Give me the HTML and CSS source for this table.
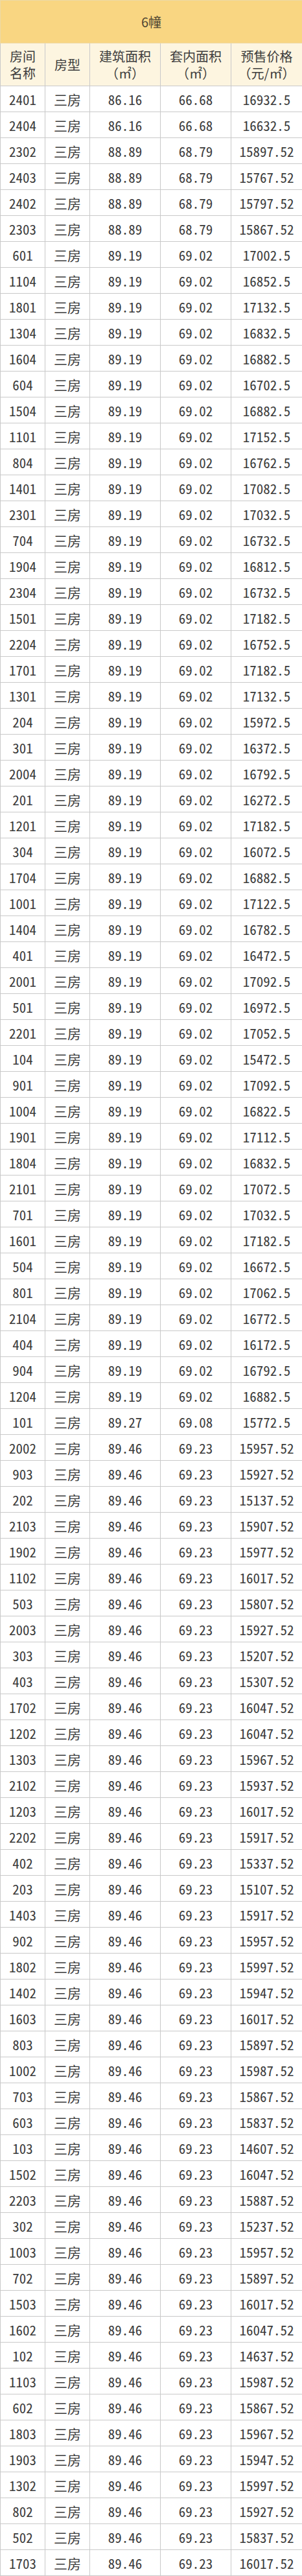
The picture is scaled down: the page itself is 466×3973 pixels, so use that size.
FILE: index.html
```html
<!DOCTYPE html>
<html lang="zh-CN">
<head>
<meta charset="utf-8">
<title>6幢</title>
<link rel="stylesheet" href="styles.css">
</head>
<body>
<table class="sheet">
<colgroup>
<col class="c-room"><col class="c-type"><col class="c-area"><col class="c-area"><col class="c-price">
</colgroup>
<thead>
<tr class="title"><th colspan="5">6幢</th></tr>
<tr class="head">
<th>房间<br>名称</th>
<th>房型</th>
<th>建筑面积<br>（㎡）</th>
<th>套内面积<br>（㎡）</th>
<th>预售价格<br>（元/㎡）</th>
</tr>
</thead>
<tbody>
<tr><td>2401</td><td>三房</td><td>86.16</td><td>66.68</td><td>16932.5</td></tr>
<tr><td>2404</td><td>三房</td><td>86.16</td><td>66.68</td><td>16632.5</td></tr>
<tr><td>2302</td><td>三房</td><td>88.89</td><td>68.79</td><td>15897.52</td></tr>
<tr><td>2403</td><td>三房</td><td>88.89</td><td>68.79</td><td>15767.52</td></tr>
<tr><td>2402</td><td>三房</td><td>88.89</td><td>68.79</td><td>15797.52</td></tr>
<tr><td>2303</td><td>三房</td><td>88.89</td><td>68.79</td><td>15867.52</td></tr>
<tr><td>601</td><td>三房</td><td>89.19</td><td>69.02</td><td>17002.5</td></tr>
<tr><td>1104</td><td>三房</td><td>89.19</td><td>69.02</td><td>16852.5</td></tr>
<tr><td>1801</td><td>三房</td><td>89.19</td><td>69.02</td><td>17132.5</td></tr>
<tr><td>1304</td><td>三房</td><td>89.19</td><td>69.02</td><td>16832.5</td></tr>
<tr><td>1604</td><td>三房</td><td>89.19</td><td>69.02</td><td>16882.5</td></tr>
<tr><td>604</td><td>三房</td><td>89.19</td><td>69.02</td><td>16702.5</td></tr>
<tr><td>1504</td><td>三房</td><td>89.19</td><td>69.02</td><td>16882.5</td></tr>
<tr><td>1101</td><td>三房</td><td>89.19</td><td>69.02</td><td>17152.5</td></tr>
<tr><td>804</td><td>三房</td><td>89.19</td><td>69.02</td><td>16762.5</td></tr>
<tr><td>1401</td><td>三房</td><td>89.19</td><td>69.02</td><td>17082.5</td></tr>
<tr><td>2301</td><td>三房</td><td>89.19</td><td>69.02</td><td>17032.5</td></tr>
<tr><td>704</td><td>三房</td><td>89.19</td><td>69.02</td><td>16732.5</td></tr>
<tr><td>1904</td><td>三房</td><td>89.19</td><td>69.02</td><td>16812.5</td></tr>
<tr><td>2304</td><td>三房</td><td>89.19</td><td>69.02</td><td>16732.5</td></tr>
<tr><td>1501</td><td>三房</td><td>89.19</td><td>69.02</td><td>17182.5</td></tr>
<tr><td>2204</td><td>三房</td><td>89.19</td><td>69.02</td><td>16752.5</td></tr>
<tr><td>1701</td><td>三房</td><td>89.19</td><td>69.02</td><td>17182.5</td></tr>
<tr><td>1301</td><td>三房</td><td>89.19</td><td>69.02</td><td>17132.5</td></tr>
<tr><td>204</td><td>三房</td><td>89.19</td><td>69.02</td><td>15972.5</td></tr>
<tr><td>301</td><td>三房</td><td>89.19</td><td>69.02</td><td>16372.5</td></tr>
<tr><td>2004</td><td>三房</td><td>89.19</td><td>69.02</td><td>16792.5</td></tr>
<tr><td>201</td><td>三房</td><td>89.19</td><td>69.02</td><td>16272.5</td></tr>
<tr><td>1201</td><td>三房</td><td>89.19</td><td>69.02</td><td>17182.5</td></tr>
<tr><td>304</td><td>三房</td><td>89.19</td><td>69.02</td><td>16072.5</td></tr>
<tr><td>1704</td><td>三房</td><td>89.19</td><td>69.02</td><td>16882.5</td></tr>
<tr><td>1001</td><td>三房</td><td>89.19</td><td>69.02</td><td>17122.5</td></tr>
<tr><td>1404</td><td>三房</td><td>89.19</td><td>69.02</td><td>16782.5</td></tr>
<tr><td>401</td><td>三房</td><td>89.19</td><td>69.02</td><td>16472.5</td></tr>
<tr><td>2001</td><td>三房</td><td>89.19</td><td>69.02</td><td>17092.5</td></tr>
<tr><td>501</td><td>三房</td><td>89.19</td><td>69.02</td><td>16972.5</td></tr>
<tr><td>2201</td><td>三房</td><td>89.19</td><td>69.02</td><td>17052.5</td></tr>
<tr><td>104</td><td>三房</td><td>89.19</td><td>69.02</td><td>15472.5</td></tr>
<tr><td>901</td><td>三房</td><td>89.19</td><td>69.02</td><td>17092.5</td></tr>
<tr><td>1004</td><td>三房</td><td>89.19</td><td>69.02</td><td>16822.5</td></tr>
<tr><td>1901</td><td>三房</td><td>89.19</td><td>69.02</td><td>17112.5</td></tr>
<tr><td>1804</td><td>三房</td><td>89.19</td><td>69.02</td><td>16832.5</td></tr>
<tr><td>2101</td><td>三房</td><td>89.19</td><td>69.02</td><td>17072.5</td></tr>
<tr><td>701</td><td>三房</td><td>89.19</td><td>69.02</td><td>17032.5</td></tr>
<tr><td>1601</td><td>三房</td><td>89.19</td><td>69.02</td><td>17182.5</td></tr>
<tr><td>504</td><td>三房</td><td>89.19</td><td>69.02</td><td>16672.5</td></tr>
<tr><td>801</td><td>三房</td><td>89.19</td><td>69.02</td><td>17062.5</td></tr>
<tr><td>2104</td><td>三房</td><td>89.19</td><td>69.02</td><td>16772.5</td></tr>
<tr><td>404</td><td>三房</td><td>89.19</td><td>69.02</td><td>16172.5</td></tr>
<tr><td>904</td><td>三房</td><td>89.19</td><td>69.02</td><td>16792.5</td></tr>
<tr><td>1204</td><td>三房</td><td>89.19</td><td>69.02</td><td>16882.5</td></tr>
<tr><td>101</td><td>三房</td><td>89.27</td><td>69.08</td><td>15772.5</td></tr>
<tr><td>2002</td><td>三房</td><td>89.46</td><td>69.23</td><td>15957.52</td></tr>
<tr><td>903</td><td>三房</td><td>89.46</td><td>69.23</td><td>15927.52</td></tr>
<tr><td>202</td><td>三房</td><td>89.46</td><td>69.23</td><td>15137.52</td></tr>
<tr><td>2103</td><td>三房</td><td>89.46</td><td>69.23</td><td>15907.52</td></tr>
<tr><td>1902</td><td>三房</td><td>89.46</td><td>69.23</td><td>15977.52</td></tr>
<tr><td>1102</td><td>三房</td><td>89.46</td><td>69.23</td><td>16017.52</td></tr>
<tr><td>503</td><td>三房</td><td>89.46</td><td>69.23</td><td>15807.52</td></tr>
<tr><td>2003</td><td>三房</td><td>89.46</td><td>69.23</td><td>15927.52</td></tr>
<tr><td>303</td><td>三房</td><td>89.46</td><td>69.23</td><td>15207.52</td></tr>
<tr><td>403</td><td>三房</td><td>89.46</td><td>69.23</td><td>15307.52</td></tr>
<tr><td>1702</td><td>三房</td><td>89.46</td><td>69.23</td><td>16047.52</td></tr>
<tr><td>1202</td><td>三房</td><td>89.46</td><td>69.23</td><td>16047.52</td></tr>
<tr><td>1303</td><td>三房</td><td>89.46</td><td>69.23</td><td>15967.52</td></tr>
<tr><td>2102</td><td>三房</td><td>89.46</td><td>69.23</td><td>15937.52</td></tr>
<tr><td>1203</td><td>三房</td><td>89.46</td><td>69.23</td><td>16017.52</td></tr>
<tr><td>2202</td><td>三房</td><td>89.46</td><td>69.23</td><td>15917.52</td></tr>
<tr><td>402</td><td>三房</td><td>89.46</td><td>69.23</td><td>15337.52</td></tr>
<tr><td>203</td><td>三房</td><td>89.46</td><td>69.23</td><td>15107.52</td></tr>
<tr><td>1403</td><td>三房</td><td>89.46</td><td>69.23</td><td>15917.52</td></tr>
<tr><td>902</td><td>三房</td><td>89.46</td><td>69.23</td><td>15957.52</td></tr>
<tr><td>1802</td><td>三房</td><td>89.46</td><td>69.23</td><td>15997.52</td></tr>
<tr><td>1402</td><td>三房</td><td>89.46</td><td>69.23</td><td>15947.52</td></tr>
<tr><td>1603</td><td>三房</td><td>89.46</td><td>69.23</td><td>16017.52</td></tr>
<tr><td>803</td><td>三房</td><td>89.46</td><td>69.23</td><td>15897.52</td></tr>
<tr><td>1002</td><td>三房</td><td>89.46</td><td>69.23</td><td>15987.52</td></tr>
<tr><td>703</td><td>三房</td><td>89.46</td><td>69.23</td><td>15867.52</td></tr>
<tr><td>603</td><td>三房</td><td>89.46</td><td>69.23</td><td>15837.52</td></tr>
<tr><td>103</td><td>三房</td><td>89.46</td><td>69.23</td><td>14607.52</td></tr>
<tr><td>1502</td><td>三房</td><td>89.46</td><td>69.23</td><td>16047.52</td></tr>
<tr><td>2203</td><td>三房</td><td>89.46</td><td>69.23</td><td>15887.52</td></tr>
<tr><td>302</td><td>三房</td><td>89.46</td><td>69.23</td><td>15237.52</td></tr>
<tr><td>1003</td><td>三房</td><td>89.46</td><td>69.23</td><td>15957.52</td></tr>
<tr><td>702</td><td>三房</td><td>89.46</td><td>69.23</td><td>15897.52</td></tr>
<tr><td>1503</td><td>三房</td><td>89.46</td><td>69.23</td><td>16017.52</td></tr>
<tr><td>1602</td><td>三房</td><td>89.46</td><td>69.23</td><td>16047.52</td></tr>
<tr><td>102</td><td>三房</td><td>89.46</td><td>69.23</td><td>14637.52</td></tr>
<tr><td>1103</td><td>三房</td><td>89.46</td><td>69.23</td><td>15987.52</td></tr>
<tr><td>602</td><td>三房</td><td>89.46</td><td>69.23</td><td>15867.52</td></tr>
<tr><td>1803</td><td>三房</td><td>89.46</td><td>69.23</td><td>15967.52</td></tr>
<tr><td>1903</td><td>三房</td><td>89.46</td><td>69.23</td><td>15947.52</td></tr>
<tr><td>1302</td><td>三房</td><td>89.46</td><td>69.23</td><td>15997.52</td></tr>
<tr><td>802</td><td>三房</td><td>89.46</td><td>69.23</td><td>15927.52</td></tr>
<tr><td>502</td><td>三房</td><td>89.46</td><td>69.23</td><td>15837.52</td></tr>
<tr><td>1703</td><td>三房</td><td>89.46</td><td>69.23</td><td>16017.52</td></tr>
</tbody>
</table>
</body>
</html>
```

FILE: styles.css
```css
html, body {
  margin: 0;
  padding: 0;
  background: #ffffff;
}

.sheet {
  width: 466px;
  border-collapse: collapse;
  table-layout: fixed;
  font-family: "Noto Sans Mono CJK SC", "Noto Sans CJK SC", monospace;
  color: #3b3b3b;
}

.c-room { width: 69px; }
.c-type { width: 69px; }
.c-area { width: 109px; }
.c-price { width: 110px; }

.sheet th,
.sheet td {
  border: 1px solid #c9c9c9;
  padding: 0;
  text-align: center;
  vertical-align: middle;
  font-weight: normal;
}

.title th {
  height: 65px;
  background: #f9d682;
  border-color: #edd9a6;
  color: #4e4532;
  font-family: "Noto Sans CJK SC", sans-serif;
  font-size: 20px;
  line-height: 24px;
}

.head th {
  height: 65px;
  background: #fdf5e0;
  font-family: "Noto Sans CJK SC", sans-serif;
  font-size: 20px;
  line-height: 26px;
  color: #3d3d3d;
}

.sheet tbody td {
  height: 38px;
  padding-top: 1px;
  font-size: 21px;
  line-height: 24px;
}
```
